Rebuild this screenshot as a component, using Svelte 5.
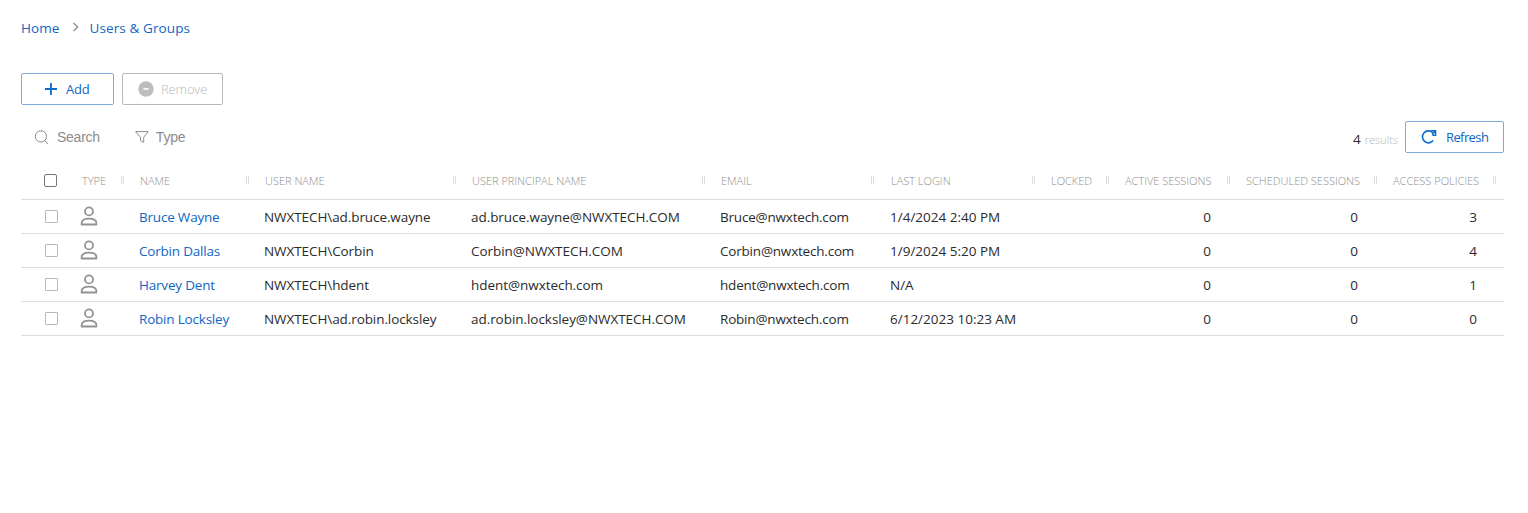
<script>
  const columns = ['Type', 'Name', 'User Name', 'User Principal Name', 'Email', 'Last Login', 'Locked', 'Active Sessions', 'Scheduled Sessions', 'Access Policies'];
  const users = [
    { name: 'Bruce Wayne', user: 'NWXTECH\\ad.bruce.wayne', upn: 'ad.bruce.wayne@NWXTECH.COM', email: 'Bruce@nwxtech.com', login: '1/4/2024 2:40 PM', active: 0, scheduled: 0, policies: 3 },
    { name: 'Corbin Dallas', user: 'NWXTECH\\Corbin', upn: 'Corbin@NWXTECH.COM', email: 'Corbin@nwxtech.com', login: '1/9/2024 5:20 PM', active: 0, scheduled: 0, policies: 4 },
    { name: 'Harvey Dent', user: 'NWXTECH\\hdent', upn: 'hdent@nwxtech.com', email: 'hdent@nwxtech.com', login: 'N/A', active: 0, scheduled: 0, policies: 1 },
    { name: 'Robin Locksley', user: 'NWXTECH\\ad.robin.locksley', upn: 'ad.robin.locksley@NWXTECH.COM', email: 'Robin@nwxtech.com', login: '6/12/2023 10:23 AM', active: 0, scheduled: 0, policies: 0 }
  ];
</script>

<main>
  <nav>
    <a href="#home">Home</a>
    <svg width="8" height="10" viewBox="0 0 8 10"><path d="M1.5 1 5.7 5 1.5 9" fill="none" stroke="#888" stroke-width="1.2" /></svg>
    <a href="#users">Users &amp; Groups</a>
  </nav>

  <div class="actions">
    <button class="add">
      <svg width="12" height="12" viewBox="0 0 12 12"><path d="M6 0v12M0 6h12" stroke="#0a6cce" stroke-width="1.8" /></svg>
      <span>Add</span>
    </button>
    <button class="remove" disabled>
      <svg width="16" height="16" viewBox="0 0 16 16"><circle cx="8" cy="8" r="7.7" fill="#bdbdbd" /><path d="M5.4 8h5.2" stroke="#fff" stroke-width="1.6" /></svg>
      <span>Remove</span>
    </button>
  </div>

  <div class="filters">
    <div class="filter search">
      <svg width="15" height="15" viewBox="0 0 15 15" fill="none" stroke="#8c8c8c"><circle cx="6.9" cy="6.4" r="5.6" /><path d="m10.8 10.4 3.2 3.8" /></svg>
      <span>Search</span>
    </div>
    <div class="filter type">
      <svg width="14" height="14" viewBox="0 0 14 14" fill="none" stroke="#8c8c8c" stroke-linejoin="round"><path d="M.6 1.6h12.6L8.7 7.3v5l-3.2-1.6V7.3z" /></svg>
      <span>Type</span>
    </div>
    <div class="results"><b>4</b><span>results</span></div>
    <button class="refresh">
      <svg width="16" height="16" viewBox="0 0 16 16" fill="none" stroke="#0a6cce"><path d="M12.2 11.6A6 6 0 1 1 11.7 3.6" stroke-width="1.6" /><path d="M10 1.8h4.6v4.4h-3.2M11 5.6l3.2-3.4" stroke-width="1.4" /></svg>
      <span>Refresh</span>
    </button>
  </div>

  <div class="table">
    <div class="row head">
      <div class="check"><i class="box"></i></div>
      {#each columns as column}
        <div class="cell"><span>{column}</span><i class="grip"></i></div>
      {/each}
    </div>
    {#each users as u}
      <div class="row">
        <div class="check"><i class="box"></i></div>
        <div class="cell person">
          <svg width="18" height="20" viewBox="0 0 18 20" fill="none" stroke="#929292" stroke-width="1.8"><circle cx="9" cy="5.4" r="4" /><path d="M1.6 18.5v-1.2c0-3.2 3-4.6 7.4-4.6s7.4 1.4 7.4 4.6v1.2z" stroke-linejoin="round" /></svg>
        </div>
        <div class="cell name"><a href="#user">{u.name}</a></div>
        <div class="cell user">{u.user}</div>
        <div class="cell upn">{u.upn}</div>
        <div class="cell email">{u.email}</div>
        <div class="cell login">{u.login}</div>
        <div class="cell"></div>
        <div class="cell num">{u.active}</div>
        <div class="cell num">{u.scheduled}</div>
        <div class="cell num">{u.policies}</div>
      </div>
    {/each}
  </div>
</main>

<style>
  :global(body) { background: #fff; }
  main {
    box-sizing: border-box;
    height: 513px;
    padding: 17px 24px 0 21px;
    font: 13.5px/20px "Open Sans", "Noto Sans", sans-serif;
    color: #2b2b2b;
    overflow: hidden;
  }
  a { color: #0f66c4; text-decoration: none; }
  nav { display: flex; height: 22px; line-height: 22px; letter-spacing: .1px; }
  nav svg { margin: 5px 10px 0 12px; }
  .actions { display: flex; gap: 8px; margin-top: 34px; }
  button {
    box-sizing: border-box;
    display: flex;
    align-items: center;
    height: 32px;
    margin: 0;
    padding: 0;
    border: 1px solid #7fa9d8;
    border-radius: 2px;
    background: #fff;
    color: #0f66c4;
    font: inherit;
    font-size: 13px;
    letter-spacing: -.15px;
  }
  .add { width: 93px; padding-left: 23px; gap: 9px; }
  .remove { width: 101px; padding-left: 15px; gap: 7px; border-color: #b9b9b9; color: #b9b9b9; font-weight: 300; }
  .filters { display: flex; height: 32px; margin-top: 16px; }
  .filter { display: flex; align-items: center; color: #8c8c8c; font: 14px/20px "Liberation Sans", Arial, sans-serif; letter-spacing: -.25px; }
  .search { margin-left: 13px; gap: 8px; }
  .type { margin-left: 35px; gap: 7px; }
  .results { margin: 8px 7px 0 auto; color: #b5b5b5; font-size: 11px; font-weight: 300; }
  .results b { margin-right: 4px; color: #2b2b2b; font-size: 13.5px; font-weight: 400; }
  .refresh { width: 99px; padding-left: 15px; gap: 9px; letter-spacing: -.6px; }
  .table { margin-top: 12px; }
  .row {
    display: grid;
    grid-template-columns: 45px 58px 125px 207px 249px 169px 161px 74px 121px 147px 119px;
    box-sizing: border-box;
    height: 34px;
    border-bottom: 1px solid #dedede;
    line-height: 34px;
    white-space: nowrap;
  }
  .head { height: 35px; line-height: 32px; color: #8e8e8e; font-size: 11px; font-weight: 300; text-transform: uppercase; }
  .cell { padding-left: 15px; }
  .head .cell { display: flex; justify-content: space-between; padding-left: 16px; }
  .grip { width: 1px; height: 8px; margin-top: 11px; border: solid #dcdcdc; border-width: 0 1px; }
  .name { letter-spacing: -.2px; }
  .user { letter-spacing: -.08px; }
  .upn { letter-spacing: -.05px; }
  .email { letter-spacing: -.2px; }
  .row .login { padding-left: 16px; }
  .head .cell:nth-child(7) { padding-left: 17px; }
  .row .num { padding: 0 19px 0 0; text-align: right; }
  .check { padding: 10px 0 0 24px; }
  .box { display: block; box-sizing: border-box; width: 13px; height: 13px; border: 1px solid #b8b8b8; border-radius: 1px; }
  .head .check { padding: 9px 0 0 23px; }
  .head .box { border-color: #777; border-radius: 2px; }
  .person { padding: 6px 0 0 14px; line-height: 0; }
</style>
